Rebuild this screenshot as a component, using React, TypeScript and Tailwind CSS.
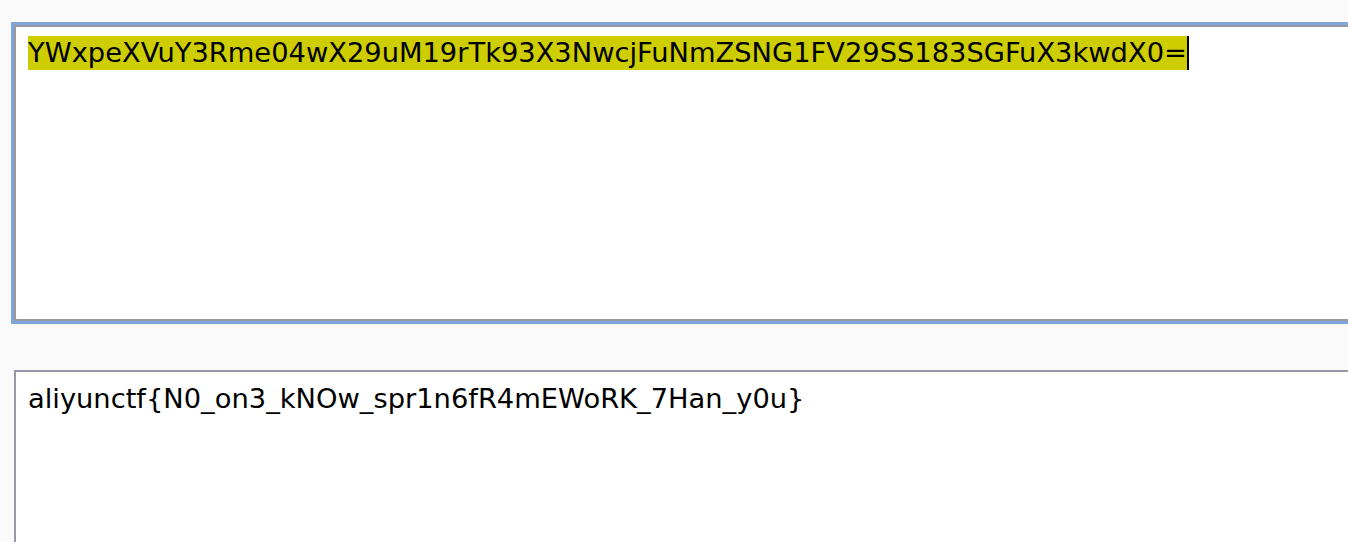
import React, { FC } from 'react';

const font = { fontFamily: '"DejaVu Sans", Verdana, sans-serif' };

const App: FC = () => {
  return (
    <div className="h-[542px] w-full overflow-hidden bg-[#fafafa]" style={font}>
      <div className="pl-[11px] pt-[22px]">
        {/* focused box */}
        <div className="h-[302px] w-[1400px] border-[3px] border-[#7ea6d6]">
          <div className="h-full border-2 border-[#9898a4] bg-white pl-[12px] pt-[9px]">
            <div className="flex items-stretch text-[27.3px] leading-[34px] text-black">
              <span className="bg-[#cdcd00]">YWxpeXVuY3Rme04wX29uM19rTk93X3NwcjFuNmZSNG1FV29SS183SGFuX3kwdX0=</span>
              <span className="w-[2px] bg-black" />
            </div>
          </div>
        </div>

        {/* result box */}
        <div className="ml-[3px] mt-[46px] h-[200px] w-[1400px] border-2 border-[#9898a4] bg-white pl-[12px] pt-[10px]">
          <div className="text-[27.3px] leading-[34px] text-black">aliyunctf&#123;N0_on3_kNOw_spr1n6fR4mEWoRK_7Han_y0u&#125;</div>
        </div>
      </div>
    </div>
  );
};

export default App;
